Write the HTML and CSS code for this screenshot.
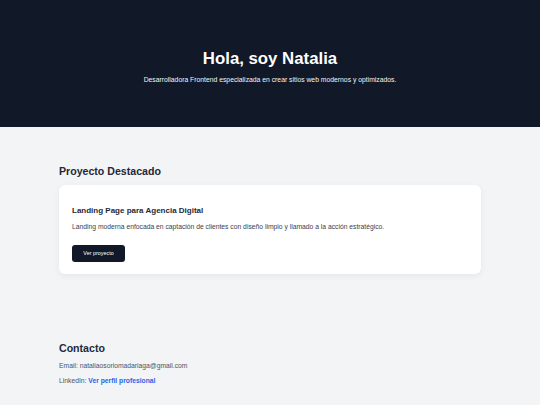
FILE: index.html
```html
<!DOCTYPE html>
<html lang="es">
<head>
<meta charset="utf-8">
<title>Natalia — Desarrolladora Frontend</title>
<link rel="stylesheet" href="styles.css">
</head>
<body>
  <header class="hero">
    <h1 class="hero-title">Hola, soy Natalia</h1>
    <p class="hero-sub">Desarrolladora Frontend especializada en crear sitios web modernos y optimizados.</p>
  </header>

  <main class="content">
    <section class="section projects">
      <h2 class="section-title">Proyecto Destacado</h2>
      <article class="card">
        <h3 class="card-title">Landing Page para Agencia Digital</h3>
        <p class="card-text">Landing moderna enfocada en captación de clientes con diseño limpio y llamado a la acción estratégico.</p>
        <a class="btn" href="#">Ver proyecto</a>
      </article>
    </section>

    <section class="section contact">
      <h2 class="section-title">Contacto</h2>
      <p class="contact-line">Email: nataliaosoriomadariaga@gmail.com</p>
      <p class="contact-line">LinkedIn: <a class="contact-link" href="#">Ver perfil profesional</a></p>
    </section>
  </main>
</body>
</html>
```

FILE: styles.css
```css
* {
  box-sizing: border-box;
}

body {
  margin: 0;
  background: #f3f4f6;
  color: #1f2937;
  font-family: "Liberation Sans", Arial, sans-serif;
}

.hero {
  background: #111827;
  color: #ffffff;
  height: 127px;
  padding-top: 48px;
  text-align: center;
}

.hero-title {
  margin: 0;
  font-size: 16.8px;
  font-weight: bold;
  line-height: 22px;
}

.hero-sub {
  margin: 5px 0 0;
  font-size: 6.8px;
  line-height: 10px;
  color: #f3f4f6;
}

.content {
  width: 422px;
  margin: 0 auto;
}

.section-title {
  margin: 0;
  font-size: 10.6px;
  font-weight: bold;
  line-height: 14px;
  color: #1f2937;
}

.projects {
  padding-top: 37px;
}

.projects .section-title {
  margin-bottom: 7px;
}

.card {
  background: #ffffff;
  border-radius: 6px;
  box-shadow: 0 2px 6px rgba(0, 0, 0, 0.06);
  padding: 20px 13px 12px;
}

.card-title {
  margin: 0;
  font-size: 8px;
  font-weight: bold;
  line-height: 11px;
  color: #1f2937;
}

.card-text {
  margin: 6px 0 13px;
  font-size: 6.75px;
  line-height: 10px;
  color: #374151;
}

.btn {
  display: block;
  width: 53px;
  background: #111827;
  color: #ffffff;
  font-size: 5.4px;
  line-height: 17px;
  text-align: center;
  border-radius: 3px;
  text-decoration: none;
}

.contact {
  padding-top: 67px;
}

.contact .section-title {
  margin-bottom: 6px;
}

.contact-line {
  margin: 0 0 5px;
  font-size: 6.75px;
  line-height: 10px;
  color: #4b5563;
}

.contact-link {
  color: #2563eb;
  font-weight: bold;
  text-decoration: none;
}
```
